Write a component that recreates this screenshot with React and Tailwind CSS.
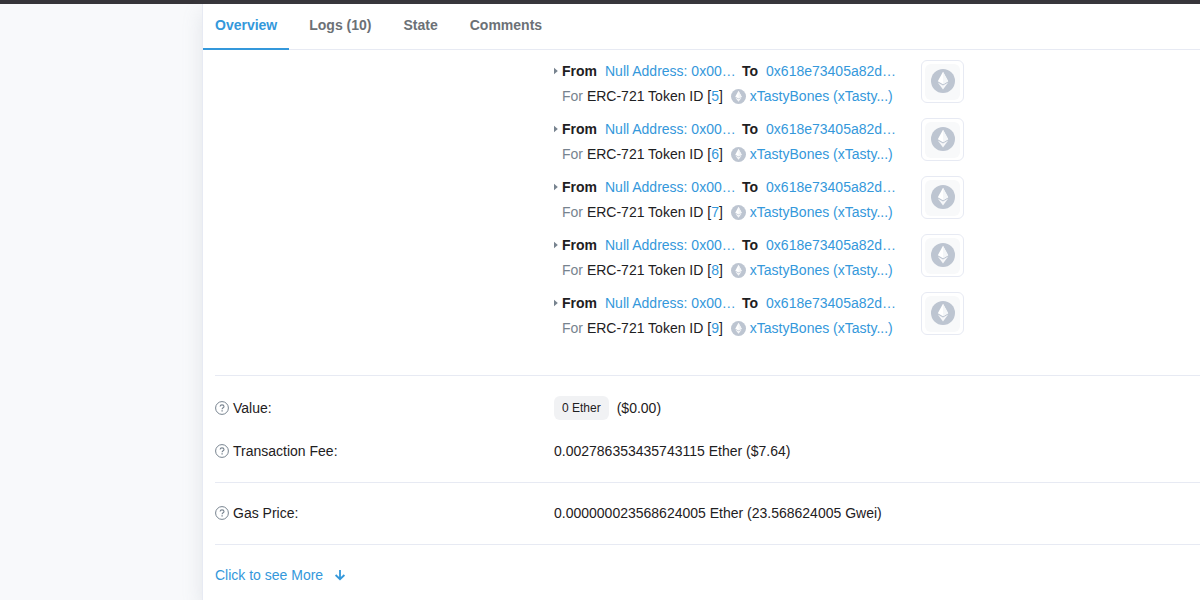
import { useState } from "react";

const tabs = ["Overview", "Logs (10)", "State", "Comments"];

const transfers = [5, 6, 7, 8, 9];

const linkStyle = "text-[#3498db] hover:text-[#1d6fa5]";

const TokenIcon = ({ className }) => (
  <svg viewBox="0 0 24 24" className={className} aria-hidden="true">
    <circle cx="12" cy="12" r="12" fill="#bdc5d1" />
    <path d="M12 2.8 6.8 12.2 12 15.3l5.2-3.1z" fill="#fff" />
    <path d="M12 2.8v12.5l5.2-3.1z" fill="#f4f6f8" />
    <path d="M6.8 13.4 12 20.4l5.2-7-5.2 3z" fill="#f6f7f9" />
  </svg>
);

const CaretRight = () => (
  <svg viewBox="0 0 4 8" className="w-1 h-2 mt-[7px] shrink-0" fill="#77838f" aria-hidden="true">
    <path d="M0 .8v6.4L3.8 4z" />
  </svg>
);

const QuestionCircle = () => (
  <svg viewBox="0 0 14 14" className="w-[14px] h-[14px] shrink-0" fill="none" stroke="#77838f" aria-hidden="true">
    <circle cx="7" cy="7" r="6.4" />
    <path d="M5.1 5.5c.1-1 .9-1.6 1.9-1.6 1.1 0 2 .6 2 1.6 0 1.3-1.9 1.3-1.9 2.7" strokeWidth="1.1" />
    <path d="M7.1 9.2v1.3" strokeWidth="1.3" />
  </svg>
);

const ArrowDown = () => (
  <svg viewBox="0 0 12 12" className="w-3 h-3" fill="none" stroke="currentColor" strokeWidth="1.8" aria-hidden="true">
    <path d="M6 1v9M1.6 6 6 10.2 10.4 6" />
  </svg>
);

const Transfer = ({ id }) => (
  <li className="flex items-start gap-[25px]">
    <div className="flex gap-1">
      <CaretRight />
      <div className="flex flex-col gap-[3px] leading-[22px] whitespace-nowrap">
        <div className="flex gap-2">
          <span className="font-bold">From</span>
          <a href="#from" className={`${linkStyle} w-[129px]`}>Null Address: 0x00…</a>
          <span className="font-bold">To</span>
          <a href="#to" className={linkStyle}>0x618e73405a82d…</a>
        </div>
        <div className="flex items-center">
          <span>
            <span className="text-[#77838f]">For</span> ERC-721 Token ID [
            <a href="#token" className={linkStyle}>{id}</a>]
          </span>
          <TokenIcon className="w-[15px] h-[15px] ml-2 mr-1" />
          <a href="#contract" className={linkStyle}>xTastyBones (xTasty...)</a>
        </div>
      </div>
    </div>
    <a
      href="#nft"
      aria-label={`NFT ${id}`}
      className="w-[43px] h-[43px] p-[3px] rounded-md border border-[#e7eaf3] bg-white shrink-0"
    >
      <span className="flex justify-center w-full h-9 pt-[5px] rounded-md bg-[#f8f9fa]">
        <TokenIcon className="w-6 h-6" />
      </span>
    </a>
  </li>
);

const DetailRow = ({ label, children }) => (
  <div className="flex items-center h-6">
    <dt className="flex items-center gap-1 w-[339px] shrink-0">
      <QuestionCircle />
      {label}
    </dt>
    <dd className="flex items-center gap-2 whitespace-nowrap">{children}</dd>
  </div>
);

const App = () => {
  const [active, setActive] = useState("Overview");

  return (
    <div className="min-h-screen flex flex-col bg-[#f8f9fb] text-[14px] leading-5 text-[#1e2022] font-['Liberation_Sans',Arial,sans-serif] overflow-hidden">
      <div className="h-1 bg-[#363439]" />

      <main className="flex-1 ml-[202px] bg-white border-l border-[#e7eaf3] shadow-[0_8px_19px_rgba(140,152,164,0.2)]">
        {/* TABS */}
        <nav className="flex gap-2 h-[46px] border-b border-[#e7eaf3]">
          {tabs.map((tab) => (
            <button
              key={tab}
              type="button"
              onClick={() => setActive(tab)}
              className={`h-[46px] px-3 pb-0.5 font-bold border-b-2 ${
                active === tab ? "text-[#3498db] border-[#3498db]" : "text-[#6c7176] border-transparent"
              }`}
            >
              {tab}
            </button>
          ))}
        </nav>

        <div className="pl-3">
          {/* TOKEN TRANSFERS */}
          <ul className="flex flex-col gap-[11px] pt-[10px] pb-9 pl-[339px] border-b border-[#e7eaf3]">
            {transfers.map((id) => (
              <Transfer key={id} id={id} />
            ))}
          </ul>

          <dl>
            <div className="flex flex-col gap-[19px] pt-5 pb-[19px] border-b border-[#e7eaf3]">
              <DetailRow label="Value:">
                <span className="px-2 rounded-md bg-[#f1f2f4] text-[12px] leading-6">0 Ether</span>
                <span>($0.00)</span>
              </DetailRow>
              <DetailRow label="Transaction Fee:">0.002786353435743115 Ether ($7.64)</DetailRow>
            </div>
            <div className="pt-[18px] pb-[19px] border-b border-[#e7eaf3]">
              <DetailRow label="Gas Price:">0.000000023568624005 Ether (23.568624005 Gwei)</DetailRow>
            </div>
          </dl>

          <a href="#more" className={`${linkStyle} inline-flex items-center gap-[11px] mt-5`}>
            Click to see More
            <ArrowDown />
          </a>
        </div>
      </main>
    </div>
  );
};

export default App;
